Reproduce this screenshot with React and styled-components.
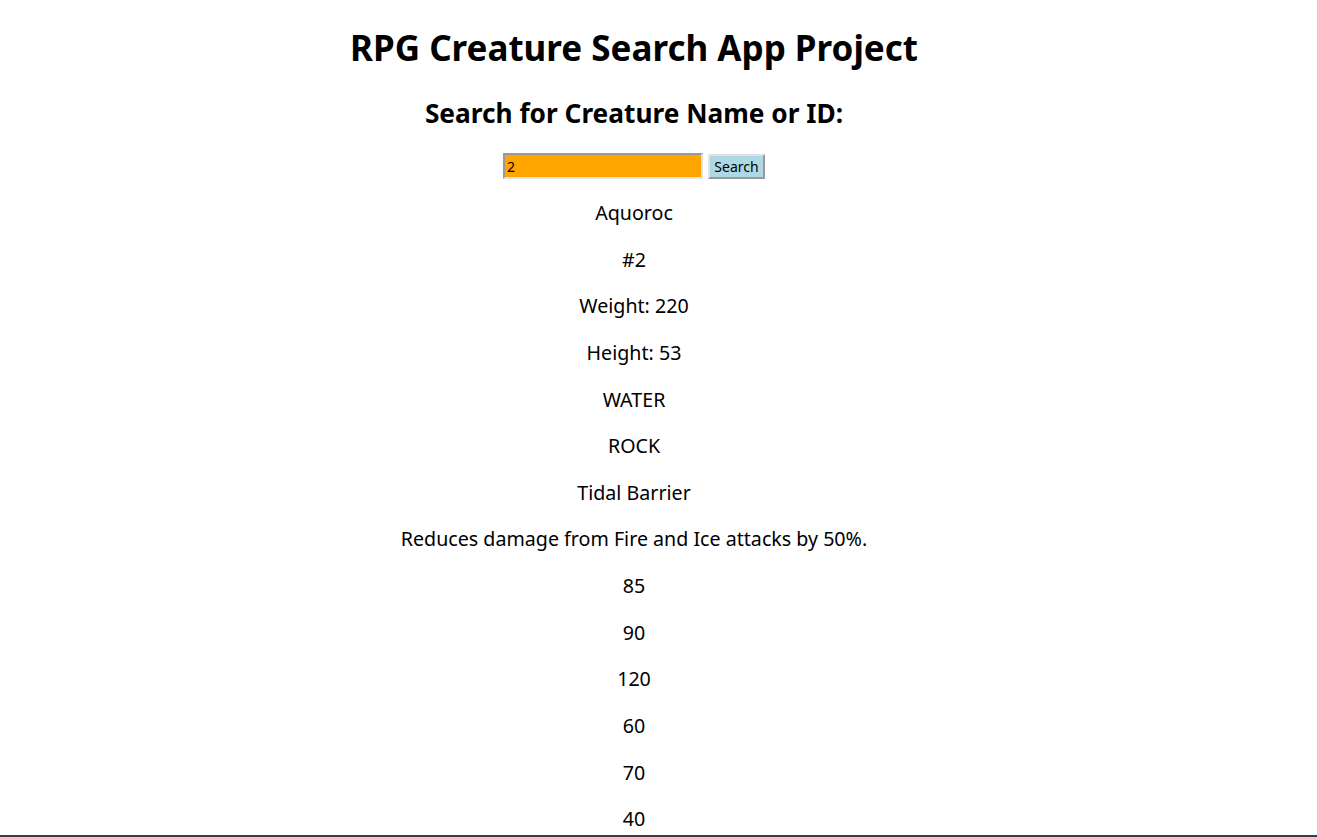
import React from 'react';
import styled, { createGlobalStyle } from 'styled-components';

const GlobalStyle = createGlobalStyle`
  body {
    margin: 0;
    background: #ffffff;
    font-family: "Noto Sans", sans-serif;
    color: #000;
  }
`;

const creature = {
  name: 'Aquoroc',
  id: 2,
  weight: 220,
  height: 53,
  types: ['WATER', 'ROCK'],
  special: 'Tidal Barrier',
  description: 'Reduces damage from Fire and Ice attacks by 50%.',
  stats: [85, 90, 120, 60, 70, 40],
};

function App() {
  return (
    <>
      <GlobalStyle />
      <Page>
        <Title>RPG Creature Search App Project</Title>
        <Subtitle>Search for Creature Name or ID:</Subtitle>
        <SearchRow>
          <SearchInput defaultValue="2" />
          <SearchButton>Search</SearchButton>
        </SearchRow>
        <Info>{creature.name}</Info>
        <Info>#{creature.id}</Info>
        <Info>Weight: {creature.weight}</Info>
        <Info>Height: {creature.height}</Info>
        {creature.types.map((t) => (
          <Info key={t}>{t}</Info>
        ))}
        <Info>{creature.special}</Info>
        <Info>{creature.description}</Info>
        {creature.stats.map((s, i) => (
          <Info key={i}>{s}</Info>
        ))}
      </Page>
      <BottomEdge />
    </>
  );
}

export default App;

const Page = styled.div`
  width: 1268px;
  display: flex;
  flex-direction: column;
  align-items: center;
  text-align: center;
  padding-top: 24px;
`;

const Title = styled.h1`
  font-size: 35px;
  font-weight: 700;
  line-height: 48px;
  margin: 0;
`;

const Subtitle = styled.h2`
  font-size: 26.25px;
  font-weight: 700;
  line-height: 36px;
  margin: 23px 0 0;
`;

const SearchRow = styled.div`
  display: flex;
  align-items: center;
  gap: 5px;
  margin-top: 22px;
`;

const SearchInput = styled.input`
  width: 200px;
  height: 26px;
  box-sizing: border-box;
  background: #ffa500;
  border: 2px solid;
  border-color: #9a9a9a #e3e3e3 #e3e3e3 #9a9a9a;
  font-family: "Noto Sans", sans-serif;
  font-size: 14px;
  padding: 0 2px;
  outline: none;
`;

const SearchButton = styled.button`
  width: 57px;
  height: 25px;
  box-sizing: border-box;
  background: #add8e6;
  border: 2px solid;
  border-color: #e3e3e3 #9a9a9a #9a9a9a #e3e3e3;
  font-family: "Noto Sans", sans-serif;
  font-size: 14px;
  color: #000;
  padding: 0;
`;

const Info = styled.p`
  font-size: 19.65px;
  margin: 0;
  line-height: 46.62px;

  &:first-of-type {
    margin-top: 11px;
  }
`;

const BottomEdge = styled.div`
  position: fixed;
  left: 0;
  right: 0;
  bottom: 0;
  height: 2px;
  background: #3a3a48;
`;
